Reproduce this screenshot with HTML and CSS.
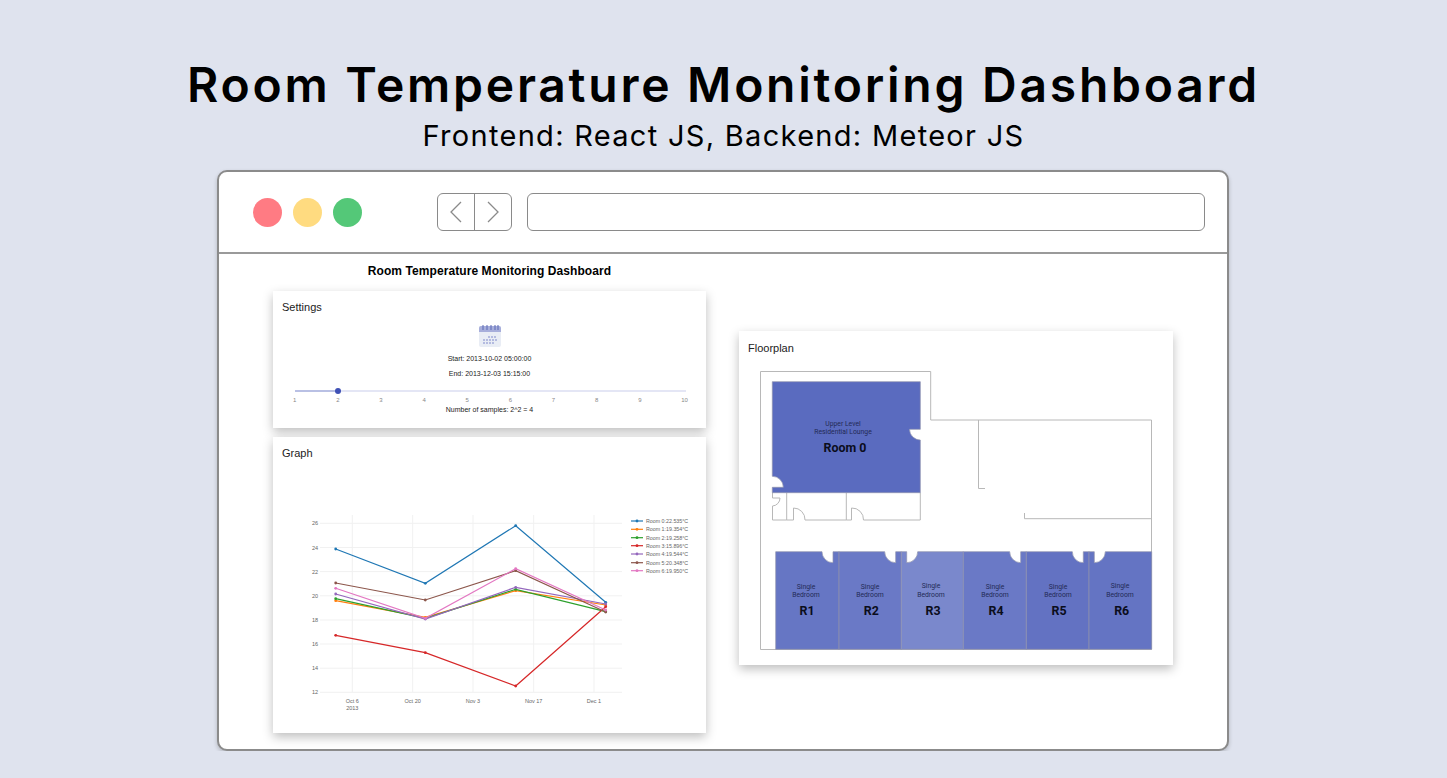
FILE: index.html
```html
<!DOCTYPE html>
<html lang="en">
    <head>
        <title>Room Temperature Monitoring Dashboard</title>
        <link rel="stylesheet" href="styles.css">
    </head>
    <body>
        <header class="hero">
            <h1>Room Temperature Monitoring Dashboard</h1>
            <p>Frontend: React JS, Backend: Meteor JS</p>
        </header>
        <div class="window">
            <div class="toolbar">
                <div class="lights">
                    <span class="light red"></span>
                    <span class="light yellow"></span>
                    <span class="light green"></span>
                </div>
                <div class="nav">
                    <div class="nav-btn">
                        <svg width="14" height="22" viewBox="0 0 14 22"><path d="M12 1 L2 11 L12 21" fill="none" stroke="#8a8a8a" stroke-width="1.3"/></svg>
                    </div>
                    <div class="nav-btn">
                        <svg width="14" height="22" viewBox="0 0 14 22"><path d="M2 1 L12 11 L2 21" fill="none" stroke="#8a8a8a" stroke-width="1.3"/></svg>
                    </div>
                </div>
                <div class="address"></div>
            </div>
            <div class="content">
                <div class="left">
                    <h2 class="page-title">Room Temperature Monitoring Dashboard</h2>
                    <section class="card settings">
                        <h3>Settings</h3>
                        <div class="settings-body">
                            <svg class="calendar" width="22" height="22" viewBox="0 0 22 22">
                                <rect x="0" y="1" width="22" height="21" rx="2" fill="#e9edf5"/>
                                <path d="M0 7 V3 a2 2 0 0 1 2 -2 H20 a2 2 0 0 1 2 2 V7 Z" fill="#a7aedb"/>
                                <path d="M4 0 V5 M8 0 V5 M12 0 V5 M16 0 V5 M19 0 V5" stroke="#5a68b5" stroke-width="1"/>
                                <g fill="#b4bbe0">
                                    <rect x="9" y="11" width="2" height="2"/><rect x="12" y="11" width="2" height="2"/><rect x="15" y="11" width="2" height="2"/>
                                    <rect x="4" y="14" width="2" height="2"/><rect x="7" y="14" width="2" height="2"/><rect x="10" y="14" width="2" height="2"/><rect x="13" y="14" width="2" height="2"/><rect x="16" y="14" width="2" height="2"/>
                                    <rect x="4" y="17" width="2" height="2"/><rect x="7" y="17" width="2" height="2"/><rect x="10" y="17" width="2" height="2"/><rect x="13" y="17" width="2" height="2"/>
                                </g>
                            </svg>
                            <div class="date">Start: 2013-10-02 05:00:00</div>
                            <div class="date">End: 2013-12-03 15:15:00</div>
                        </div>
                        <div class="slider">
                            <div class="track">
                                <div class="track-fill"></div>
                                <span class="thumb"></span>
                            </div>
                            <div class="ticks">
                                <span>1</span><span>2</span><span>3</span><span>4</span><span>5</span><span>6</span><span>7</span><span>8</span><span>9</span><span>10</span>
                            </div>
                        </div>
                        <div class="samples">Number of samples: 2^2 = 4</div>
                    </section>
                    <section class="card graph">
                        <h3>Graph</h3>
                        <svg class="chart" width="400" height="205" viewBox="300 510 400 205">
                            <!-- grid -->
                            <g class="grid">
                                <path d="M320 523.3H622 M320 547.5H622 M320 571.6H622 M320 595.8H622 M320 620H622 M320 644H622 M320 668.2H622 M320 692.3H622"/>
                                <path d="M352.3 515V692 M412.7 515V692 M473 515V692 M533.7 515V692 M594 515V692"/>
                            </g>
                            <g class="axis">
                                <text x="315" y="525" text-anchor="middle">26</text>
                                <text x="315" y="549.5" text-anchor="middle">24</text>
                                <text x="315" y="573.5" text-anchor="middle">22</text>
                                <text x="315" y="597.5" text-anchor="middle">20</text>
                                <text x="315" y="622" text-anchor="middle">18</text>
                                <text x="315" y="646" text-anchor="middle">16</text>
                                <text x="315" y="670" text-anchor="middle">14</text>
                                <text x="315" y="694" text-anchor="middle">12</text>
                                <text x="352.3" y="702.5" text-anchor="middle">Oct 6</text>
                                <text x="352.3" y="709.5" text-anchor="middle">2013</text>
                                <text x="412.7" y="702.5" text-anchor="middle">Oct 20</text>
                                <text x="473" y="702.5" text-anchor="middle">Nov 3</text>
                                <text x="533.7" y="702.5" text-anchor="middle">Nov 17</text>
                                <text x="594" y="702.5" text-anchor="middle">Dec 1</text>
                            </g>
                            <!-- series -->
                            <g class="series" stroke="#1f77b4" fill="#1f77b4">
                                <polyline points="335.7,549 425.3,583.3 515.7,525.7 605.7,602.3"/>
                                <circle cx="335.7" cy="549" r="1.4"/><circle cx="425.3" cy="583.3" r="1.4"/><circle cx="515.7" cy="525.7" r="1.4"/><circle cx="605.7" cy="602.3" r="1.4"/>
                            </g>
                            <g class="series" stroke="#ff7f0e" fill="#ff7f0e">
                                <polyline points="335.7,600.7 425.3,617.3 515.7,590.7 605.7,605"/>
                                <circle cx="335.7" cy="600.7" r="1.4"/><circle cx="425.3" cy="617.3" r="1.4"/><circle cx="515.7" cy="590.7" r="1.4"/><circle cx="605.7" cy="605" r="1.4"/>
                            </g>
                            <g class="series" stroke="#2ca02c" fill="#2ca02c">
                                <polyline points="335.7,598.7 425.3,618.3 515.7,589.3 605.7,611.7"/>
                                <circle cx="335.7" cy="598.7" r="1.4"/><circle cx="425.3" cy="618.3" r="1.4"/><circle cx="515.7" cy="589.3" r="1.4"/><circle cx="605.7" cy="611.7" r="1.4"/>
                            </g>
                            <g class="series" stroke="#d62728" fill="#d62728">
                                <polyline points="335.7,635.3 425.3,652.7 515.7,686 605.7,606.7"/>
                                <circle cx="335.7" cy="635.3" r="1.4"/><circle cx="425.3" cy="652.7" r="1.4"/><circle cx="515.7" cy="686" r="1.4"/><circle cx="605.7" cy="606.7" r="1.4"/>
                            </g>
                            <g class="series" stroke="#9467bd" fill="#9467bd">
                                <polyline points="335.7,594 425.3,619 515.7,587.3 605.7,604"/>
                                <circle cx="335.7" cy="594" r="1.4"/><circle cx="425.3" cy="619" r="1.4"/><circle cx="515.7" cy="587.3" r="1.4"/><circle cx="605.7" cy="604" r="1.4"/>
                            </g>
                            <g class="series" stroke="#8c564b" fill="#8c564b">
                                <polyline points="335.7,583 425.3,600 515.7,570.7 605.7,612"/>
                                <circle cx="335.7" cy="583" r="1.4"/><circle cx="425.3" cy="600" r="1.4"/><circle cx="515.7" cy="570.7" r="1.4"/><circle cx="605.7" cy="612" r="1.4"/>
                            </g>
                            <g class="series" stroke="#e377c2" fill="#e377c2">
                                <polyline points="335.7,588.3 425.3,618.3 515.7,568.7 605.7,610"/>
                                <circle cx="335.7" cy="588.3" r="1.4"/><circle cx="425.3" cy="618.3" r="1.4"/><circle cx="515.7" cy="568.7" r="1.4"/><circle cx="605.7" cy="610" r="1.4"/>
                            </g>
                            <!-- legend -->
                            <g class="legend-keys">
                                <g stroke="#1f77b4" fill="#1f77b4"><path d="M631 521H643"/><circle cx="637" cy="521" r="1.4"/></g>
                                <g stroke="#ff7f0e" fill="#ff7f0e"><path d="M631 529.3H643"/><circle cx="637" cy="529.3" r="1.4"/></g>
                                <g stroke="#2ca02c" fill="#2ca02c"><path d="M631 537.7H643"/><circle cx="637" cy="537.7" r="1.4"/></g>
                                <g stroke="#d62728" fill="#d62728"><path d="M631 545.7H643"/><circle cx="637" cy="545.7" r="1.4"/></g>
                                <g stroke="#9467bd" fill="#9467bd"><path d="M631 554H643"/><circle cx="637" cy="554" r="1.4"/></g>
                                <g stroke="#8c564b" fill="#8c564b"><path d="M631 562.7H643"/><circle cx="637" cy="562.7" r="1.4"/></g>
                                <g stroke="#e377c2" fill="#e377c2"><path d="M631 570.7H643"/><circle cx="637" cy="570.7" r="1.4"/></g>
                            </g>
                            <g class="legend">
                                <text x="646" y="523">Room 0:22.535°C</text>
                                <text x="646" y="531.2">Room 1:19.354°C</text>
                                <text x="646" y="539.6">Room 2:19.258°C</text>
                                <text x="646" y="547.6">Room 3:15.896°C</text>
                                <text x="646" y="555.9">Room 4:19.544°C</text>
                                <text x="646" y="564.6">Room 5:20.348°C</text>
                                <text x="646" y="572.6">Room 6:19.950°C</text>
                            </g>
                        </svg>
                    </section>
                </div>
                <section class="card floorplan">
                    <h3>Floorplan</h3>
                    <svg class="plan" width="410" height="290" viewBox="750 365 410 290">
                        <!-- walls -->
                        <g class="wall">
                            <path d="M760.5 371.5 H930.7 V420 H1151.5 V649.5 H760.5 Z"/>
                            <path d="M978.5 420 V488.5 H985"/>
                            <path d="M1024.5 513 V518.7 H1151.5"/>
                            <path d="M772.5 492.7 V498 H780 A8 8 0 0 1 772.5 506 V520 H786.7 V492.7 M786.7 520 H793.5 V508 A11.5 11.5 0 0 1 805 520 H846.3 V492.7 M846.3 520 H851.5 V508 A11.5 11.5 0 0 1 863.5 520 H920.3 V492.7"/>
                        </g>
                        <!-- rooms -->
                        <path class="room r0" d="M772.3 381.7 H920.3 V429.3 H909.5 A10.8 10.8 0 0 0 920.3 440 V492.7 H772.3 V487.3 H783.3 A11 11 0 0 0 772.3 476.3 Z"/>
                        <path class="room r1" d="M775.7 551.7 H822 A11 11 0 0 0 833 562.7 V551.7 H839 V649.3 H775.7 Z"/>
                        <path class="room r2" d="M839 551.7 H884.7 A11 11 0 0 0 895.7 562.7 V551.7 H901.3 V649.3 H839 Z"/>
                        <path class="room r3" d="M901.3 551.7 H906.7 V562.7 A11 11 0 0 0 917.7 551.7 H963.3 V649.3 H901.3 Z"/>
                        <path class="room r4" d="M963.3 551.7 H1009.7 A11 11 0 0 0 1020.7 562.7 V551.7 H1026.3 V649.3 H963.3 Z"/>
                        <path class="room r5" d="M1026.3 551.7 H1072.3 A11 11 0 0 0 1083.3 562.7 V551.7 H1089 V649.3 H1026.3 Z"/>
                        <path class="room r6" d="M1089 551.7 H1094.3 V562.7 A11 11 0 0 0 1105.3 551.7 H1151.7 V649.3 H1089 Z"/>
                        <!-- labels -->
                        <g class="room-sub">
                            <text x="843" y="426">Upper Level</text>
                            <text x="843" y="433.5">Residential Lounge</text>
                            <text x="806" y="588.5">Single</text>
                            <text x="806" y="597">Bedroom</text>
                            <text x="870" y="588.5">Single</text>
                            <text x="870" y="597">Bedroom</text>
                            <text x="931" y="588">Single</text>
                            <text x="931" y="596.5">Bedroom</text>
                            <text x="995" y="588.5">Single</text>
                            <text x="995" y="597">Bedroom</text>
                            <text x="1058" y="588.5">Single</text>
                            <text x="1058" y="597">Bedroom</text>
                            <text x="1120" y="588">Single</text>
                            <text x="1120" y="596.5">Bedroom</text>
                        </g>
                        <g class="room-name">
                            <text x="845" y="451.5">Room 0</text>
                            <text x="807" y="615">R1</text>
                            <text x="871.3" y="615">R2</text>
                            <text x="933" y="614.5">R3</text>
                            <text x="996" y="615">R4</text>
                            <text x="1059" y="615">R5</text>
                            <text x="1121.7" y="614.5">R6</text>
                        </g>
                    </svg>
                </section>
            </div>
        </div>
    </body>
</html>
```
FILE: styles.css
```css
* {
    box-sizing: border-box;
}

body {
    margin: 0;
    background-color: #dfe3ee;
    font-family: 'Liberation Sans', sans-serif;
    color: black;
}

.hero {
    text-align: center;
    font-family: 'Inter', sans-serif;
    padding-top: 55px;
    height: 170px;
}
.hero h1 {
    margin: 0;
    font-size: 48px;
    line-height: 60px;
    font-weight: 600;
    letter-spacing: 2.75px;
}
.hero p {
    margin: 0;
    font-size: 29px;
    line-height: 42px;
    font-weight: 400;
    letter-spacing: 1.3px;
}

.window {
    width: 1012px;
    height: 581px;
    margin-left: 217px;
    background-color: white;
    border: 2px solid #8b8b8b;
    border-radius: 10px;
    box-shadow: 0 2px 4px rgba(0, 0, 0, 0.2);
}

.toolbar {
    height: 82px;
    display: flex;
    align-items: center;
    border-bottom: 2px solid #9a9a9a;
    padding: 0 22px 0 34px;
}
.lights {
    display: flex;
    gap: 11px;
    width: 184px;
}
.light {
    width: 29px;
    height: 29px;
    border-radius: 50%;
}
.light.red { background-color: #ff7b83; }
.light.yellow { background-color: #ffdb80; }
.light.green { background-color: #54c878; }

.nav {
    display: flex;
    width: 75px;
    height: 38px;
    border: 1px solid #8a8a8a;
    border-radius: 6px;
    margin-right: 15px;
}
.nav-btn {
    flex: 1;
    display: flex;
    align-items: center;
    justify-content: center;
}
.nav-btn + .nav-btn {
    border-left: 1px solid #8a8a8a;
}
.address {
    flex: 1;
    height: 38px;
    border: 1px solid #8a8a8a;
    border-radius: 6px;
}

.content {
    display: flex;
    padding-left: 54px;
    gap: 33px;
}
.left {
    width: 433px;
}
.page-title {
    margin: 0;
    padding-top: 10px;
    height: 37px;
    text-align: center;
    font-size: 12px;
    line-height: 15px;
    font-weight: bold;
    letter-spacing: 0.08px;
}

.card {
    background-color: white;
    box-shadow: 0 4px 10px rgba(0, 0, 0, 0.26);
}
.card h3 {
    margin: 0;
    font-size: 11px;
    line-height: 13px;
    font-weight: normal;
    color: #222;
}

.settings {
    height: 137px;
    padding: 10px 9px 0;
    margin-bottom: 9px;
}
.settings-body {
    display: flex;
    flex-direction: column;
    align-items: center;
    padding-top: 11px;
}
.calendar {
    display: block;
}
.date {
    font-size: 7px;
    line-height: 15px;
    color: #222;
}
.settings-body .calendar + .date {
    margin-top: 4px;
}

.slider {
    margin: 9px 11px 0 13px;
}
.track {
    position: relative;
    height: 2px;
    background-color: #e4e6f5;
}
.track-fill {
    width: 11.1%;
    height: 2px;
    background-color: #b9c0e4;
}
.thumb {
    position: absolute;
    left: 11.1%;
    top: -2px;
    width: 6px;
    height: 6px;
    margin-left: -3px;
    border-radius: 50%;
    background-color: #3f51b5;
}
.ticks {
    display: flex;
    justify-content: space-between;
    font-size: 6px;
    line-height: 8px;
    margin: 4px -2px 0;
    color: #888;
}
.samples {
    text-align: center;
    font-size: 7px;
    line-height: 9px;
    color: #222;
    margin-top: 1px;
}

.graph {
    height: 296px;
    padding: 10px 9px 0;
}
.chart {
    display: block;
    margin-top: 50px;
    margin-left: 18px;
}
.grid path {
    fill: none;
    stroke: #f1f1f1;
    stroke-width: 1;
}
.axis text, .legend text {
    font-family: 'Liberation Sans', sans-serif;
    fill: #666;
}
.axis text {
    font-size: 5.5px;
}
.legend text {
    font-size: 5.3px;
}
.series polyline {
    fill: none;
    stroke-width: 1.2;
}
.series circle, .legend-keys circle {
    stroke: none;
}
.legend-keys path {
    stroke-width: 1.2;
}

.floorplan {
    width: 434px;
    height: 334px;
    margin-top: 77px;
    padding: 11px 9px 0;
}
.plan {
    display: block;
    margin-top: 10px;
    margin-left: 2px;
}
.wall path {
    fill: none;
    stroke: #b8b8b8;
    stroke-width: 1;
}
.room {
    stroke: #8f94ad;
    stroke-width: 0.7;
}
.r0 { fill: #5a6bbf; }
.r1 { fill: #6676c4; }
.r2 { fill: #6a79c6; }
.r3 { fill: #7a88cc; }
.r4 { fill: #6a79c6; }
.r5 { fill: #6372c2; }
.r6 { fill: #6474c3; }
.room-sub text {
    font-family: 'Roboto', sans-serif;
    font-size: 6.8px;
    text-anchor: middle;
    fill: #232a55;
}
.room-name text {
    font-family: 'Roboto', sans-serif;
    font-size: 12.4px;
    font-weight: 700;
    text-anchor: middle;
    fill: #0b0d1c;
}
```
